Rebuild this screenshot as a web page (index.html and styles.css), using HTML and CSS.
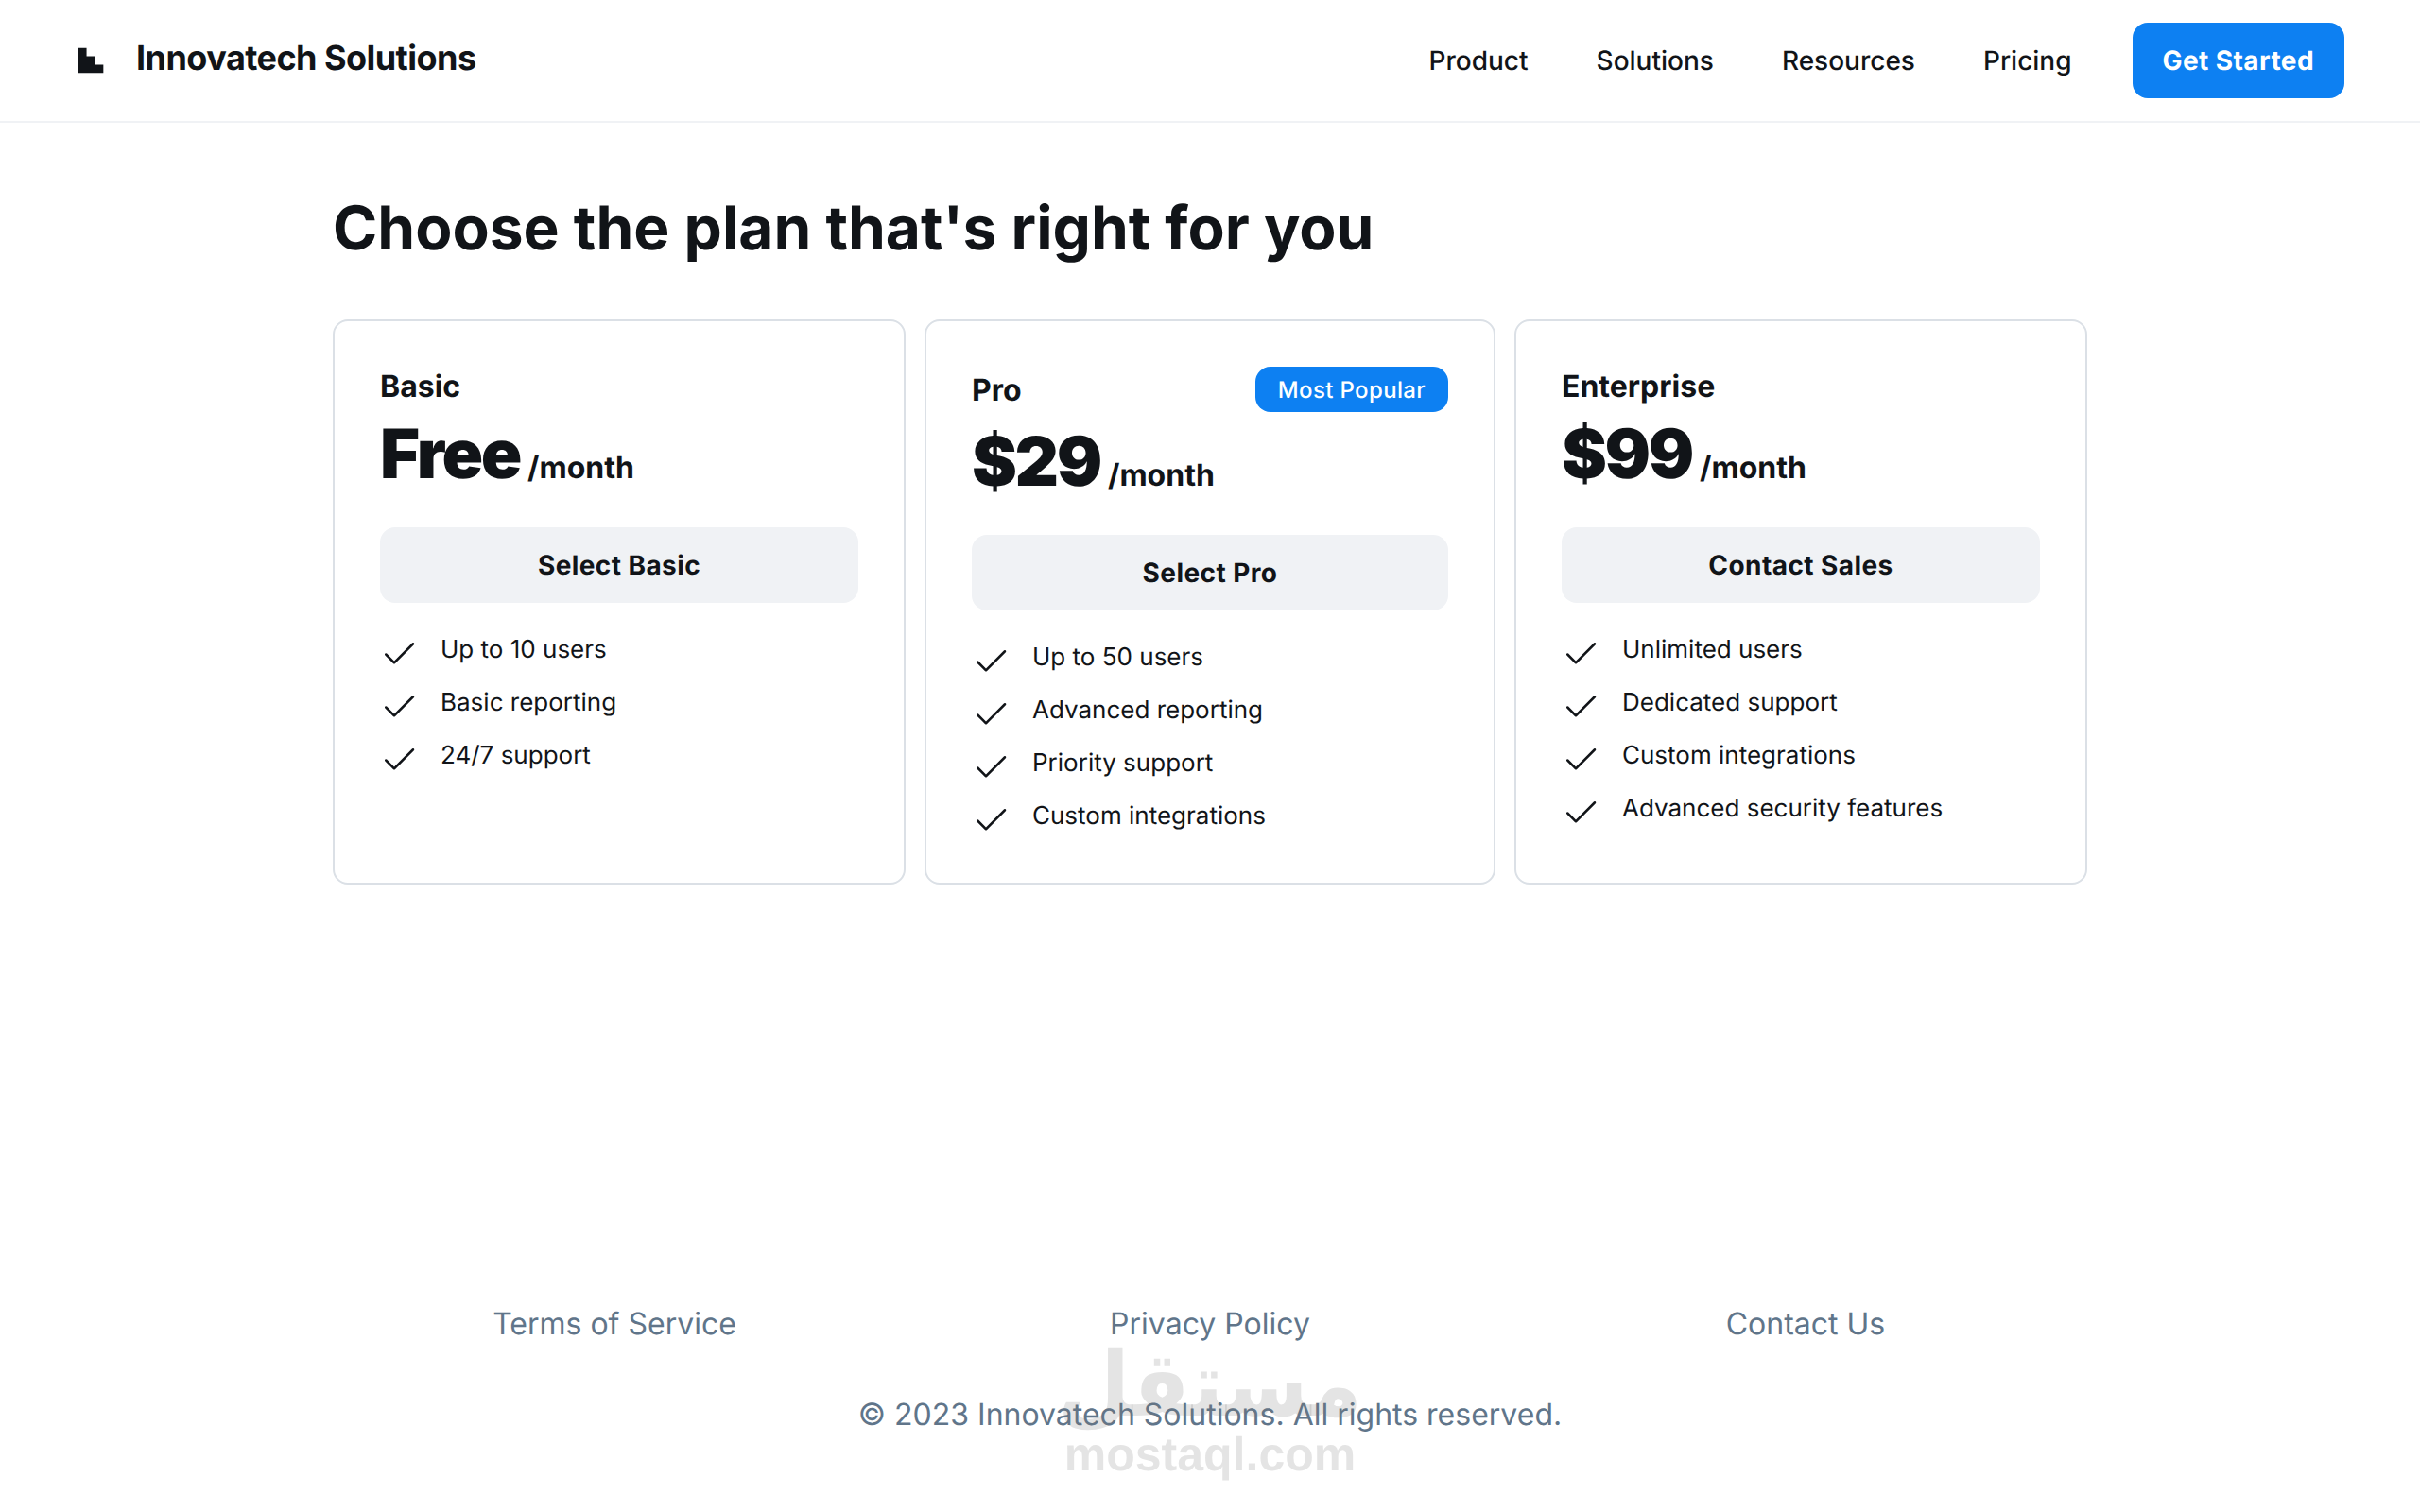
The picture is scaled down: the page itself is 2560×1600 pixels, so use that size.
FILE: index.html
```html
<!DOCTYPE html>
<html lang="en">
<head>
<meta charset="utf-8">
<title>Innovatech Solutions - Pricing</title>
<link rel="stylesheet" href="styles.css">
</head>
<body>
<div class="page">
  <header class="topbar">
    <div class="brand">
      <svg class="brand-mark" viewBox="0 0 48 48" aria-hidden="true"><path d="M4 4H17.3334V17.3334H30.6666V30.6666H44V44H4V4Z"/></svg>
      <h2 class="brand-name">Innovatech Solutions</h2>
    </div>
    <div class="topbar-right">
      <nav class="nav">
        <a class="nav-link" href="#">Product</a>
        <a class="nav-link" href="#">Solutions</a>
        <a class="nav-link" href="#">Resources</a>
        <a class="nav-link" href="#">Pricing</a>
      </nav>
      <button class="cta">Get Started</button>
    </div>
  </header>

  <main class="main">
    <div class="container">
      <h1 class="title">Choose the plan that's right for you</h1>
      <section class="plans">
        <article class="plan">
          <div class="plan-top">
            <div class="plan-head"><h3 class="plan-name">Basic</h3></div>
            <p class="price"><span class="amount">Free</span><span class="per">/month</span></p>
          </div>
          <button class="select">Select Basic</button>
          <ul class="features">
            <li class="feature"><svg class="check" viewBox="0 0 256 256" aria-hidden="true"><path d="M229.66,77.66l-128,128a8,8,0,0,1-11.32,0l-56-56a8,8,0,0,1,11.32-11.32L96,188.69,218.34,66.34a8,8,0,0,1,11.32,11.32Z"/></svg><span class="feature-text">Up to 10 users</span></li>
            <li class="feature"><svg class="check" viewBox="0 0 256 256" aria-hidden="true"><path d="M229.66,77.66l-128,128a8,8,0,0,1-11.32,0l-56-56a8,8,0,0,1,11.32-11.32L96,188.69,218.34,66.34a8,8,0,0,1,11.32,11.32Z"/></svg><span class="feature-text">Basic reporting</span></li>
            <li class="feature"><svg class="check" viewBox="0 0 256 256" aria-hidden="true"><path d="M229.66,77.66l-128,128a8,8,0,0,1-11.32,0l-56-56a8,8,0,0,1,11.32-11.32L96,188.69,218.34,66.34a8,8,0,0,1,11.32,11.32Z"/></svg><span class="feature-text">24/7 support</span></li>
          </ul>
        </article>

        <article class="plan">
          <div class="plan-top">
            <div class="plan-head"><h3 class="plan-name">Pro</h3><span class="badge">Most Popular</span></div>
            <p class="price"><span class="amount">$29</span><span class="per">/month</span></p>
          </div>
          <button class="select">Select Pro</button>
          <ul class="features">
            <li class="feature"><svg class="check" viewBox="0 0 256 256" aria-hidden="true"><path d="M229.66,77.66l-128,128a8,8,0,0,1-11.32,0l-56-56a8,8,0,0,1,11.32-11.32L96,188.69,218.34,66.34a8,8,0,0,1,11.32,11.32Z"/></svg><span class="feature-text">Up to 50 users</span></li>
            <li class="feature"><svg class="check" viewBox="0 0 256 256" aria-hidden="true"><path d="M229.66,77.66l-128,128a8,8,0,0,1-11.32,0l-56-56a8,8,0,0,1,11.32-11.32L96,188.69,218.34,66.34a8,8,0,0,1,11.32,11.32Z"/></svg><span class="feature-text">Advanced reporting</span></li>
            <li class="feature"><svg class="check" viewBox="0 0 256 256" aria-hidden="true"><path d="M229.66,77.66l-128,128a8,8,0,0,1-11.32,0l-56-56a8,8,0,0,1,11.32-11.32L96,188.69,218.34,66.34a8,8,0,0,1,11.32,11.32Z"/></svg><span class="feature-text">Priority support</span></li>
            <li class="feature"><svg class="check" viewBox="0 0 256 256" aria-hidden="true"><path d="M229.66,77.66l-128,128a8,8,0,0,1-11.32,0l-56-56a8,8,0,0,1,11.32-11.32L96,188.69,218.34,66.34a8,8,0,0,1,11.32,11.32Z"/></svg><span class="feature-text">Custom integrations</span></li>
          </ul>
        </article>

        <article class="plan">
          <div class="plan-top">
            <div class="plan-head"><h3 class="plan-name">Enterprise</h3></div>
            <p class="price"><span class="amount">$99</span><span class="per">/month</span></p>
          </div>
          <button class="select">Contact Sales</button>
          <ul class="features">
            <li class="feature"><svg class="check" viewBox="0 0 256 256" aria-hidden="true"><path d="M229.66,77.66l-128,128a8,8,0,0,1-11.32,0l-56-56a8,8,0,0,1,11.32-11.32L96,188.69,218.34,66.34a8,8,0,0,1,11.32,11.32Z"/></svg><span class="feature-text">Unlimited users</span></li>
            <li class="feature"><svg class="check" viewBox="0 0 256 256" aria-hidden="true"><path d="M229.66,77.66l-128,128a8,8,0,0,1-11.32,0l-56-56a8,8,0,0,1,11.32-11.32L96,188.69,218.34,66.34a8,8,0,0,1,11.32,11.32Z"/></svg><span class="feature-text">Dedicated support</span></li>
            <li class="feature"><svg class="check" viewBox="0 0 256 256" aria-hidden="true"><path d="M229.66,77.66l-128,128a8,8,0,0,1-11.32,0l-56-56a8,8,0,0,1,11.32-11.32L96,188.69,218.34,66.34a8,8,0,0,1,11.32,11.32Z"/></svg><span class="feature-text">Custom integrations</span></li>
            <li class="feature"><svg class="check" viewBox="0 0 256 256" aria-hidden="true"><path d="M229.66,77.66l-128,128a8,8,0,0,1-11.32,0l-56-56a8,8,0,0,1,11.32-11.32L96,188.69,218.34,66.34a8,8,0,0,1,11.32,11.32Z"/></svg><span class="feature-text">Advanced security features</span></li>
          </ul>
        </article>
      </section>
    </div>
  </main>

  <footer class="footer">
    <div class="footer-links">
      <a class="footer-link" href="#">Terms of Service</a>
      <a class="footer-link" href="#">Privacy Policy</a>
      <a class="footer-link" href="#">Contact Us</a>
    </div>
    <p class="copyright">© 2023 Innovatech Solutions. All rights reserved.</p>
  </footer>

  <div class="watermark" aria-hidden="true">
    <span class="watermark-ar" lang="ar" dir="rtl">مستقل</span>
    <span class="watermark-en">mostaql.com</span>
  </div>
</div>
</body>
</html>
```

FILE: styles.css
```css
* {
  box-sizing: border-box;
}

html,
body {
  margin: 0;
  padding: 0;
  background: #ffffff;
}

body {
  font-family: "Inter", "Liberation Sans", sans-serif;
  color: #111418;
  text-rendering: geometricPrecision;
}

.page {
  position: relative;
  display: flex;
  flex-direction: column;
  min-height: 1600px;
  overflow: hidden;
}

/* Header */
.topbar {
  display: flex;
  align-items: center;
  justify-content: space-between;
  padding: 24px 80px;
  border-bottom: 2px solid #f0f2f5;
}

.brand {
  display: flex;
  align-items: center;
  gap: 32px;
}

.brand-mark {
  display: block;
  width: 32px;
  height: 32px;
  fill: #111418;
}

.brand-name {
  margin: 0;
  padding-bottom: 6px;
  font-size: 36px;
  font-weight: 700;
  line-height: 45px;
  letter-spacing: -0.54px;
}

.topbar-right {
  display: flex;
  align-items: center;
  gap: 64px;
}

.nav {
  display: flex;
  align-items: center;
  gap: 72px;
}

.nav-link {
  color: #111418;
  font-size: 28px;
  font-weight: 500;
  line-height: 42px;
  text-decoration: none;
}

.cta {
  height: 80px;
  min-width: 168px;
  padding: 0 32px;
  border: 0;
  border-radius: 16px;
  background: #0d80f2;
  color: #ffffff;
  font-family: inherit;
  font-size: 28px;
  font-weight: 700;
  letter-spacing: 0.42px;
  text-rendering: geometricPrecision;
}

/* Main */
.main {
  flex: 1;
  display: flex;
  justify-content: center;
  padding: 40px 0;
}

.container {
  width: 1920px;
}

.title {
  margin: 0;
  padding: 32px;
  font-size: 64px;
  font-weight: 700;
  line-height: 80px;
}

.plans {
  display: grid;
  grid-template-columns: 606px 604px 606px;
  gap: 20px;
  padding: 24px 32px;
}

.plan {
  display: flex;
  flex-direction: column;
  gap: 32px;
  padding: 48px;
  border: 2px solid #dbe0e6;
  border-radius: 16px;
  background: #ffffff;
}

.plan-top {
  display: flex;
  flex-direction: column;
  gap: 8px;
}

.plan-head {
  display: flex;
  align-items: center;
  justify-content: space-between;
}

.plan-name {
  margin: 0;
  padding-top: 2px;
  font-size: 32px;
  font-weight: 700;
  line-height: 38px;
}

.badge {
  display: flex;
  align-items: center;
  height: 48px;
  padding: 0 24px;
  border-radius: 16px;
  background: #0d80f2;
  color: #ffffff;
  font-size: 24px;
  font-weight: 500;
  letter-spacing: 0.36px;
}

.price {
  display: flex;
  align-items: baseline;
  gap: 8px;
  margin: 0;
}

.amount {
  font-size: 72px;
  font-weight: 900;
  line-height: 90px;
  letter-spacing: -2.376px;
}

.per {
  font-size: 32px;
  font-weight: 700;
  line-height: 40px;
}

.select {
  width: 100%;
  height: 80px;
  padding: 0 32px;
  border: 0;
  border-radius: 16px;
  background: #f0f2f5;
  color: #111418;
  font-family: inherit;
  font-size: 28px;
  font-weight: 700;
  letter-spacing: 0.42px;
  text-rendering: geometricPrecision;
}

.features {
  display: flex;
  flex-direction: column;
  gap: 16px;
  margin: 0;
  padding: 0;
  list-style: none;
}

.feature {
  display: flex;
  align-items: flex-start;
  gap: 24px;
  height: 40px;
  font-size: 26px;
  line-height: 35px;
}

.check {
  display: block;
  flex: none;
  width: 40px;
  height: 40px;
  fill: #111418;
}

/* Footer */
.footer {
  display: flex;
  flex-direction: column;
  gap: 48px;
  padding: 81px 40px 79px;
  text-align: center;
}

.footer-links {
  display: grid;
  grid-template-columns: repeat(3, 630px);
  justify-content: center;
}

.footer-link,
.copyright {
  margin: 0;
  color: #60758a;
  font-size: 32px;
  font-weight: 400;
  line-height: 48px;
  text-decoration: none;
}

/* Watermark laid over the footer */
.watermark {
  position: absolute;
  left: 1125px;
  top: 1417px;
  display: flex;
  flex-direction: column;
  align-items: center;
  width: 310px;
  color: rgba(120, 120, 120, 0.2);
  pointer-events: none;
}

.watermark-ar {
  display: block;
  font-family: "DejaVu Sans", sans-serif;
  font-size: 88px;
  font-weight: 700;
  line-height: 97px;
  transform: scaleY(1.08);
}

.watermark-en {
  font-family: "Liberation Sans", sans-serif;
  font-size: 50px;
  font-weight: 700;
  line-height: 50px;
}
```
